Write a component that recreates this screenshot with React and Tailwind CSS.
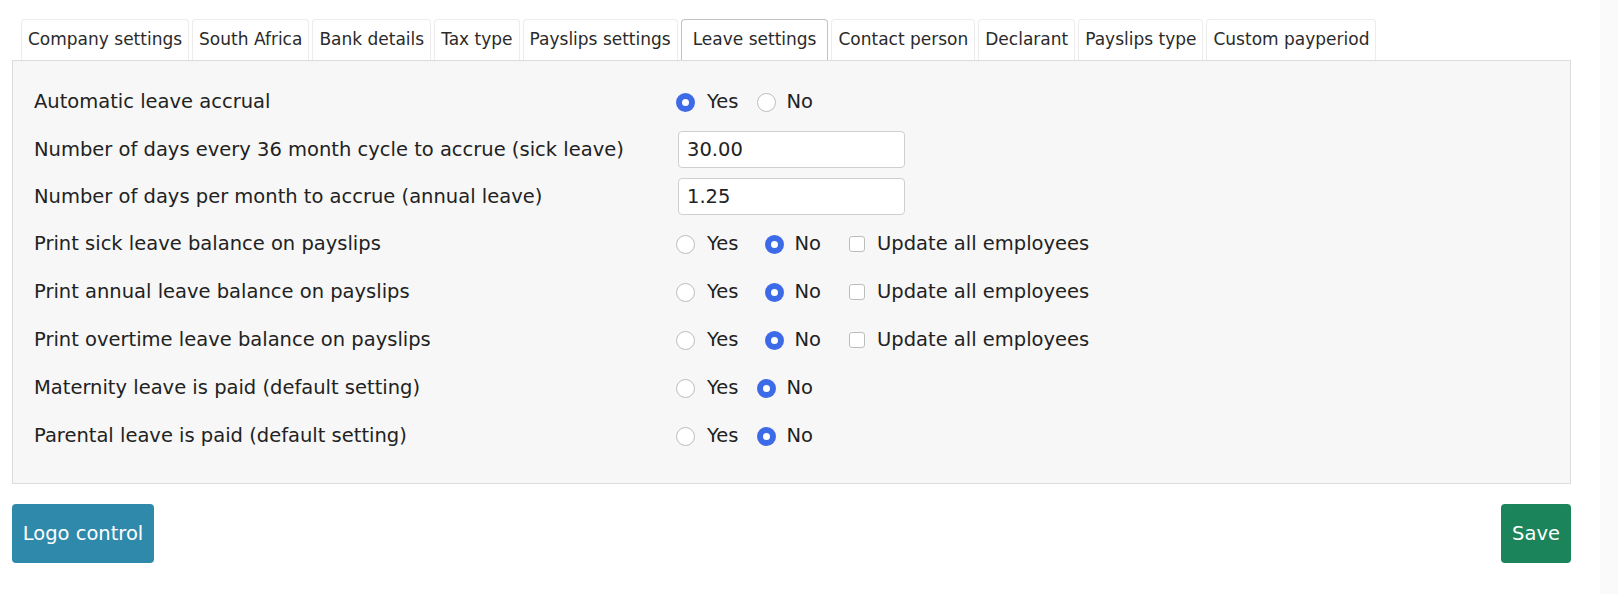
import React, { useState } from 'react';

const tabs = [
  'Company settings',
  'South Africa',
  'Bank details',
  'Tax type',
  'Payslips settings',
  'Leave settings',
  'Contact person',
  'Declarant',
  'Payslips type',
  'Custom payperiod',
];

const Radio = ({ checked }) => (
  <span
    className={`inline-block w-[19px] h-[19px] rounded-full shrink-0 ${
      checked ? 'border-[6px] border-[#3d6ae6] bg-white' : 'border border-[#bdbdbd] bg-white'
    }`}
  />
);

const YesNo = ({ value, wide }) => (
  <div className="flex items-center">
    <Radio checked={value === 'yes'} />
    <span className="ml-[12px]">Yes</span>
    <span className={wide ? 'ml-[27px] flex items-center' : 'ml-[19px] flex items-center'}>
      <Radio checked={value === 'no'} />
    </span>
    <span className="ml-[10px]">No</span>
  </div>
);

const UpdateAll = () => (
  <div className="flex items-center ml-[28px]">
    <span className="inline-block w-[16px] h-[16px] rounded-[3px] border border-[#bdbdbd] bg-white" />
    <span className="ml-[12px]">Update all employees</span>
  </div>
);

const Row = ({ label, children, tall }) => (
  <div className={`flex items-center ${tall ? 'h-[48px]' : 'h-[47px]'}`}>
    <div className="w-[642px] shrink-0">{label}</div>
    <div className="flex items-center">{children}</div>
  </div>
);

const App = () => {
  const [active] = useState('Leave settings');

  return (
    <div className="w-full h-[594px] flex bg-white text-[#222]" style={{ fontFamily: '"DejaVu Sans", Verdana, sans-serif' }}>
      <div className="w-[1600px] shrink-0 pt-[19px] pl-[12px]">
        {/* Tabs */}
        <div className="flex items-end gap-[3px] pl-[9px] h-[41px]">
          {tabs.map((t) => (
            <div
              key={t}
              className={`h-[41px] flex items-center rounded-t-[4px] border border-b-0 bg-white text-[17px] text-[#2a2a2a] ${
                t === active ? 'border-[#c2c2c2] px-[11px]' : 'border-[#ececec] px-[6px]'
              }`}
            >
              {t}
            </div>
          ))}
        </div>

        {/* Panel */}
        <div className="w-[1559px] border border-[#dcdcdc] bg-[#f7f7f7] pl-[21px] pt-[17px] pb-[23px] text-[19.5px]">
          <Row label="Automatic leave accrual" tall>
            <YesNo value="yes" />
          </Row>
          <Row label="Number of days every 36 month cycle to accrue (sick leave)">
            <input
              defaultValue="30.00"
              className="ml-[2px] w-[227px] h-[37px] border border-[#cfcfcf] rounded-[4px] bg-white px-[8px] text-[19.5px] text-[#222] outline-none"
            />
          </Row>
          <Row label="Number of days per month to accrue (annual leave)">
            <input
              defaultValue="1.25"
              className="ml-[2px] w-[227px] h-[37px] border border-[#cfcfcf] rounded-[4px] bg-white px-[8px] text-[19.5px] text-[#222] outline-none"
            />
          </Row>
          <Row label="Print sick leave balance on payslips" tall>
            <YesNo value="no" wide />
            <UpdateAll />
          </Row>
          <Row label="Print annual leave balance on payslips" tall>
            <YesNo value="no" wide />
            <UpdateAll />
          </Row>
          <Row label="Print overtime leave balance on payslips" tall>
            <YesNo value="no" wide />
            <UpdateAll />
          </Row>
          <Row label="Maternity leave is paid (default setting)" tall>
            <YesNo value="no" />
          </Row>
          <Row label="Parental leave is paid (default setting)" tall>
            <YesNo value="no" />
          </Row>
        </div>

        {/* Buttons */}
        <div className="w-[1559px] mt-[20px] flex justify-between">
          <button className="w-[142px] h-[59px] rounded-[4px] bg-[#2f89ab] text-white text-[19.5px]">Logo control</button>
          <button className="w-[70px] h-[59px] rounded-[4px] bg-[#1b845a] text-white text-[19.5px]">Save</button>
        </div>
      </div>
      <div className="flex-1 bg-[#fafafa]" />
    </div>
  );
};

export default App;
